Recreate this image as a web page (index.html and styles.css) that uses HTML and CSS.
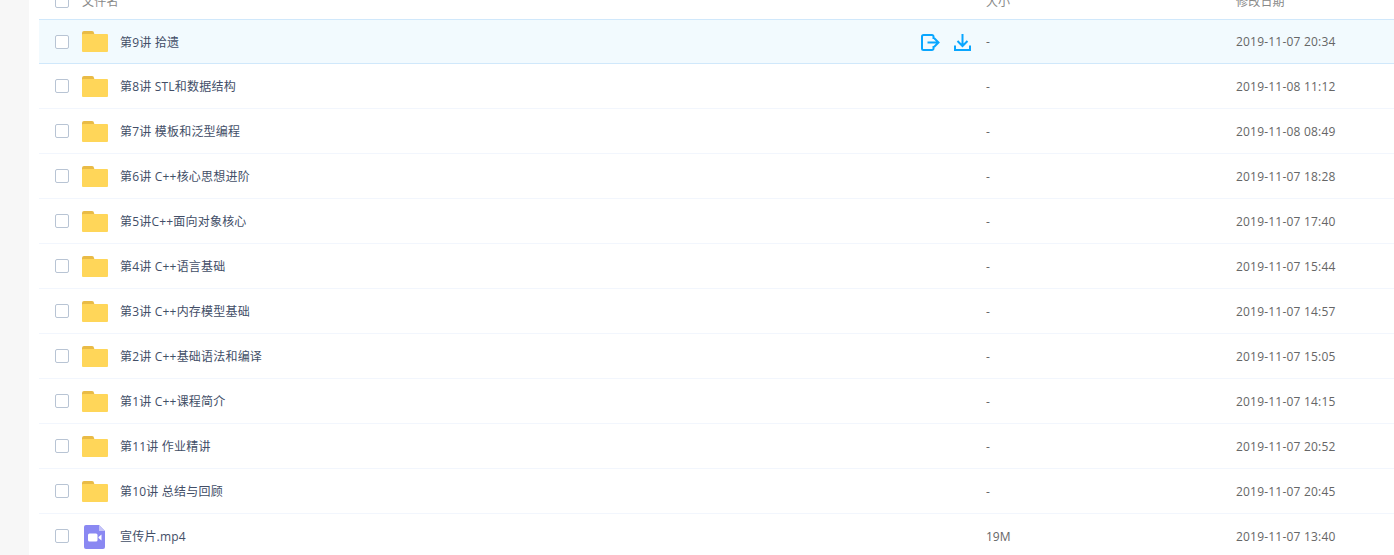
FILE: index.html
```html
<!DOCTYPE html>
<html lang="zh-CN">
<head>
<meta charset="utf-8">
<title>文件列表</title>
<link rel="stylesheet" href="styles.css">
</head>
<body>
<main class="panel">
  <svg class="defs" width="0" height="0" aria-hidden="true">
    <symbol id="folder" viewBox="0 0 26 21">
      <path fill="#e9bb46" d="M0 2a2 2 0 0 1 2-2h8a2 2 0 0 1 2 2l1 3H0z"/>
      <path fill="#ffd659" d="M1 3h24a1 1 0 0 1 1 1v16a1 1 0 0 1-1 1H1a1 1 0 0 1-1-1V4a1 1 0 0 1 1-1z"/>
    </symbol>
  </svg>
  <div class="row head">
    <span class="check"></span>
    <span class="head-name">文件名</span><span class="size">大小</span><span class="date">修改日期</span>
  </div>
  <div class="row active">
    <span class="check"></span><span class="icon-cell"><svg class="folder"><use href="#folder"/></svg></span>
    <span class="name">第9讲 拾遗</span>
    <span class="actions">
      <svg class="act act-exit" viewBox="0 0 19 17" fill="none" stroke="#09a6ff" stroke-width="2"><path d="M12.500 5V2.500A1.500 1.500 0 0 0 11 1H2.500A1.500 1.500 0 0 0 1 2.500v12A1.500 1.500 0 0 0 2.500 16H11a1.500 1.500 0 0 0 1.500-1.500V12"/><path d="M6.500 8.500h11M13 4l4.500 4.500L13 13"/></svg>
      <svg class="act act-down" viewBox="0 0 17 17" fill="none" stroke="#09a6ff" stroke-width="2"><path d="M8.500 0v12M3.500 7l5 5 5-5"/><path d="M1 11.500V16h15v-4.500"/></svg>
    </span>
    <span class="size">-</span><span class="date">2019-11-07 20:34</span>
  </div>
  <div class="row"><span class="check"></span><span class="icon-cell"><svg class="folder"><use href="#folder"/></svg></span><span class="name">第8讲 STL和数据结构</span><span class="size">-</span><span class="date">2019-11-08 11:12</span></div>
  <div class="row"><span class="check"></span><span class="icon-cell"><svg class="folder"><use href="#folder"/></svg></span><span class="name">第7讲 模板和泛型编程</span><span class="size">-</span><span class="date">2019-11-08 08:49</span></div>
  <div class="row"><span class="check"></span><span class="icon-cell"><svg class="folder"><use href="#folder"/></svg></span><span class="name">第6讲 C++核心思想进阶</span><span class="size">-</span><span class="date">2019-11-07 18:28</span></div>
  <div class="row"><span class="check"></span><span class="icon-cell"><svg class="folder"><use href="#folder"/></svg></span><span class="name">第5讲C++面向对象核心</span><span class="size">-</span><span class="date">2019-11-07 17:40</span></div>
  <div class="row"><span class="check"></span><span class="icon-cell"><svg class="folder"><use href="#folder"/></svg></span><span class="name">第4讲 C++语言基础</span><span class="size">-</span><span class="date">2019-11-07 15:44</span></div>
  <div class="row"><span class="check"></span><span class="icon-cell"><svg class="folder"><use href="#folder"/></svg></span><span class="name">第3讲 C++内存模型基础</span><span class="size">-</span><span class="date">2019-11-07 14:57</span></div>
  <div class="row"><span class="check"></span><span class="icon-cell"><svg class="folder"><use href="#folder"/></svg></span><span class="name">第2讲 C++基础语法和编译</span><span class="size">-</span><span class="date">2019-11-07 15:05</span></div>
  <div class="row"><span class="check"></span><span class="icon-cell"><svg class="folder"><use href="#folder"/></svg></span><span class="name">第1讲 C++课程简介</span><span class="size">-</span><span class="date">2019-11-07 14:15</span></div>
  <div class="row"><span class="check"></span><span class="icon-cell"><svg class="folder"><use href="#folder"/></svg></span><span class="name">第11讲 作业精讲</span><span class="size">-</span><span class="date">2019-11-07 20:52</span></div>
  <div class="row"><span class="check"></span><span class="icon-cell"><svg class="folder"><use href="#folder"/></svg></span><span class="name">第10讲 总结与回顾</span><span class="size">-</span><span class="date">2019-11-07 20:45</span></div>
  <div class="row">
    <span class="check"></span>
    <span class="icon-cell icon-file">
      <svg class="video" viewBox="0 0 21 24"><path fill="#8a88f2" d="M2 0h13l6 6v16a2 2 0 0 1-2 2H2a2 2 0 0 1-2-2V2a2 2 0 0 1 2-2z"/><path fill="#c4c3f8" d="M15 0l6 6h-6z"/><rect fill="#fff" x="4" y="8.500" width="9.500" height="8" rx="1.500"/><path fill="#fff" d="M14.500 12 17.500 9.500v6L14.500 13z"/></svg>
    </span>
    <span class="name">宣传片.mp4</span><span class="size">19M</span><span class="date">2019-11-07 13:40</span>
  </div>
</main>
</body>
</html>
```
FILE: styles.css
```css
* { box-sizing: border-box; }
html, body { margin: 0; height: 555px; overflow: hidden; }
body {
  background: #f7f7f7;
  font-family: "Open Sans", "Noto Sans CJK SC", sans-serif;
  font-size: 12px;
  letter-spacing: 0.2px;
  color: #424e67;
  padding-left: 29px;
}
.panel {
  background: #fff;
  height: 600px;
  margin-top: -18px;
  padding-left: 10px;
}
.defs { display: block; }
.row {
  display: grid;
  grid-template-columns: 43px 38px 866px 250px 1fr;
  grid-template-rows: 1fr;
  height: 45px;
  align-items: center;
  border-bottom: 1px solid #f2f6fd;
}
.head {
  height: 37px;
  border-bottom: 0;
}
.check {
  grid-column: 1;
  grid-row: 1;
  width: 14px;
  height: 14px;
  margin-left: 16px;
  border: 1px solid #b8c4d4;
  border-radius: 2px;
  background: #fff;
}
.icon-cell { grid-column: 2; grid-row: 1; display: flex; align-items: center; }
.icon-file { padding: 2px 0 0 2px; }
.folder { width: 26px; height: 21px; display: block; }
.video { width: 21px; height: 24px; display: block; }
.name { grid-column: 3; grid-row: 1; white-space: nowrap; }
.size { grid-column: 4; grid-row: 1; color: #666; letter-spacing: 0; }
.date { grid-column: 5; grid-row: 1; color: #666; white-space: nowrap; }
.head-name { grid-column: 2 / 4; grid-row: 1; }
.head .head-name, .head .size, .head .date { color: #888; }
.active {
  background: #f2fafe;
  border-top: 1px solid #d0e8fb;
  border-bottom-color: #d0e8fb;
}
.actions {
  grid-column: 3;
  grid-row: 1;
  justify-self: end;
  display: flex;
  align-items: center;
  gap: 14px;
  padding: 2px 15px 0 0;
}
.act { display: block; height: 17px; }
.act-exit { width: 19px; }
.act-down { width: 17px; }
```
